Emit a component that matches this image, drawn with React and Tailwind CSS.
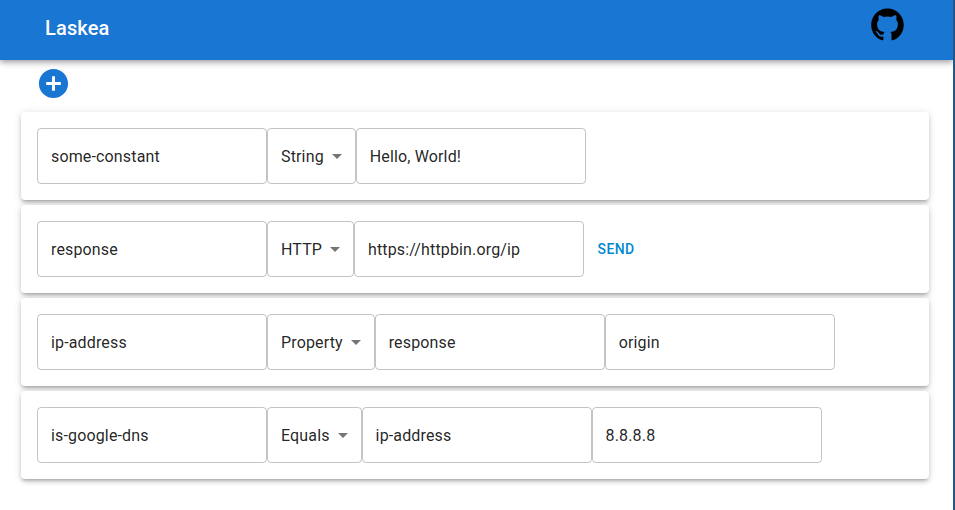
const ROWS = [
  { name: 'some-constant', type: 'String', width: 'w-[88.7px]', values: ['Hello, World!'] },
  { name: 'response', type: 'HTTP', width: 'w-[87px]', values: ['https://httpbin.org/ip'], send: true },
  { name: 'ip-address', type: 'Property', width: 'w-[107.7px]', values: ['response', 'origin'] },
  { name: 'is-google-dns', type: 'Equals', width: 'w-[94.6px]', values: ['ip-address', '8.8.8.8'] },
];

function Field({ value }) {
  return (
    <div className="flex h-14 w-[230px] shrink-0 items-center rounded border border-black/23 px-[13px] pt-px">
      <span>{value}</span>
    </div>
  );
}

function Select({ value, width }) {
  return (
    <div className={`flex h-14 shrink-0 items-center justify-between rounded border border-black/23 pr-[6px] pl-[13px] ${width}`}>
      <span className="pt-px">{value}</span>
      <svg className="size-6 shrink-0 fill-black/54" viewBox="0 0 24 24">
        <path d="M7 10l5 5 5-5z" />
      </svg>
    </div>
  );
}

function Row({ row }) {
  return (
    <div className="flex h-[88px] items-center rounded bg-white px-4 shadow-[0_3px_3px_-2px_rgba(0,0,0,0.2),0_3px_4px_0_rgba(0,0,0,0.14),0_1px_8px_0_rgba(0,0,0,0.12)]">
      <Field value={row.name} />
      <Select value={row.type} width={row.width} />
      {row.values.map((v) => (
        <Field key={v} value={v} />
      ))}
      {row.send && (
        <button className="ml-[13.5px] text-sm font-medium tracking-[0.4px] text-[#0288d1]">SEND</button>
      )}
    </div>
  );
}

export default function App() {
  return (
    <div className="flex h-[510px] w-[955px] flex-col overflow-hidden border-r-2 border-[#235684] bg-white font-[Roboto,sans-serif] text-base tracking-[0.15px] text-black/87">
      <header className="flex h-[60px] shrink-0 items-start justify-between bg-[#1976d2] pr-[49px] pl-[45px] shadow-[0_2px_4px_-1px_rgba(0,0,0,0.2),0_4px_5px_0_rgba(0,0,0,0.14),0_1px_10px_0_rgba(0,0,0,0.12)]">
        <h1 className="mt-3 text-xl leading-8 font-medium text-white">Laskea</h1>
        <svg className="h-[42px] w-[33px] fill-black" viewBox="0 0 33 42">
          <path
            transform="translate(0.2 8.6) scale(0.3333 0.3312)"
            d="M48.854 0C21.839 0 0 22 0 49.217c0 21.756 13.993 40.172 33.405 46.69 2.427.49 3.316-1.059 3.316-2.362 0-1.141-.08-5.052-.08-9.127-13.59 2.934-16.42-5.867-16.42-5.867-2.184-5.704-5.42-7.17-5.42-7.17-4.448-3.015.324-3.015.324-3.015 4.934.326 7.523 5.052 7.523 5.052 4.367 7.496 11.404 5.378 14.235 4.074.404-3.178 1.699-5.378 3.074-6.6-10.839-1.141-22.243-5.378-22.243-24.283 0-5.378 1.94-9.778 5.014-13.2-.485-1.222-2.184-6.275.486-13.038 0 0 4.125-1.304 13.426 5.052a46.97 46.97 0 0 1 12.214-1.63c4.125 0 8.33.571 12.213 1.63 9.302-6.356 13.427-5.052 13.427-5.052 2.67 6.763.97 11.816.485 13.038 3.155 3.422 5.015 7.822 5.015 13.2 0 18.905-11.404 23.06-22.324 24.283 1.78 1.548 3.316 4.481 3.316 9.126 0 6.6-.08 11.897-.08 13.526 0 1.304.89 2.853 3.316 2.364 19.412-6.52 33.405-24.935 33.405-46.691C97.707 22 75.788 0 48.854 0z"
          />
        </svg>
      </header>
      <div className="flex h-[52px] shrink-0 items-start pt-[6px] pl-9">
        <svg className="size-[35px] fill-[#1976d2]" viewBox="0 0 24 24">
          <path d="M12 2C6.48 2 2 6.48 2 12s4.48 10 10 10 10-4.48 10-10S17.52 2 12 2zm5 11h-4v4h-2v-4H7v-2h4V7h2v4h4v2z" />
        </svg>
      </div>
      <main className="flex flex-col gap-[5px] pr-6 pl-[21px]">
        {ROWS.map((row) => (
          <Row key={row.name} row={row} />
        ))}
      </main>
    </div>
  );
}
